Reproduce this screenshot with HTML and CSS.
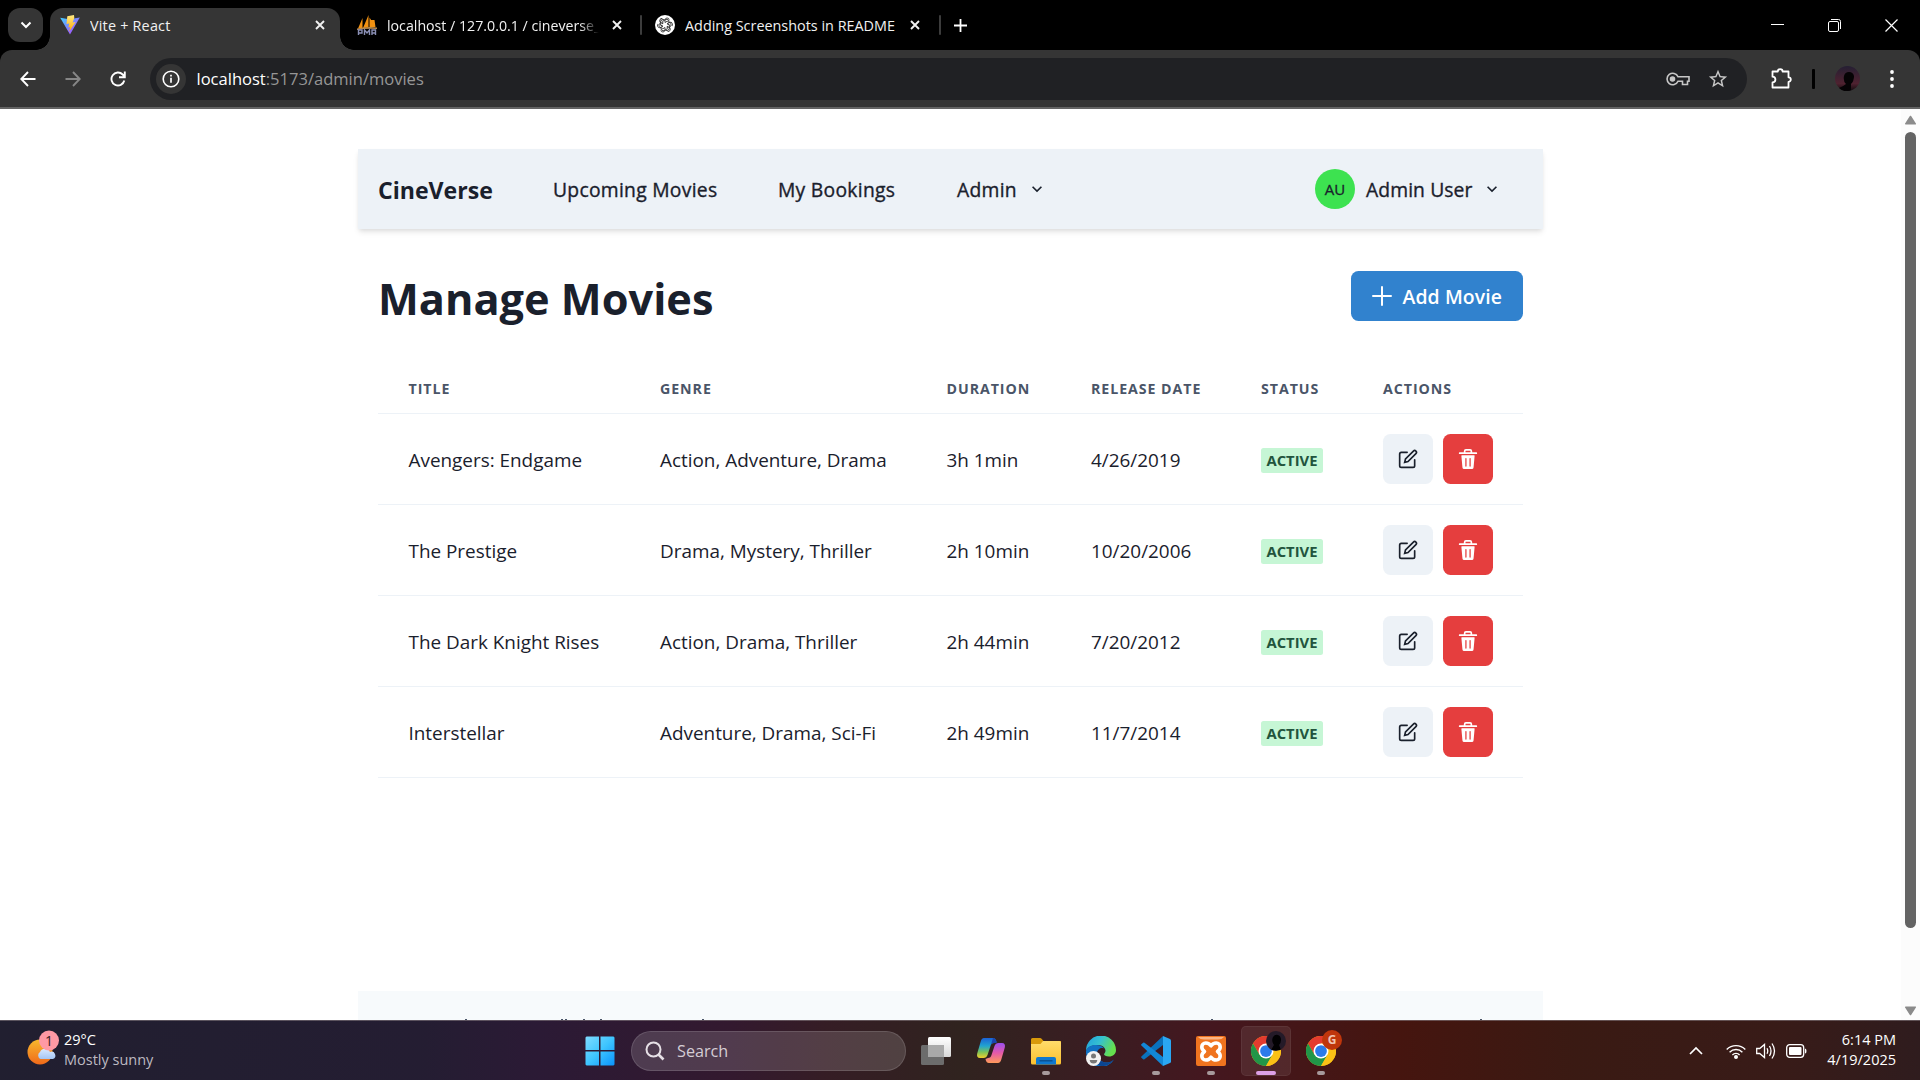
FILE: index.html
```html
<!DOCTYPE html>
<html lang="en">
<head>
<meta charset="utf-8">
<title>Vite + React</title>
<link rel="stylesheet" href="styles.css">
</head>
<body>
<svg class="defs" width="0" height="0" aria-hidden="true">
  <defs>
    <symbol id="chevron" viewBox="0 0 24 24"><path d="M16.59 8.59L12 13.17 7.41 8.59 6 10l6 6 6-6z"/></symbol>
    <symbol id="edit" viewBox="0 0 24 24"><g fill="none" stroke="currentColor" stroke-linecap="round" stroke-width="2"><path d="M11 4H4a2 2 0 0 0-2 2v14a2 2 0 0 0 2 2h14a2 2 0 0 0 2-2v-7"/><path d="M18.5 2.5a2.121 2.121 0 0 1 3 3L12 15l-4 1 1-4 9.5-9.5z"/></g></symbol>
    <symbol id="trash" viewBox="0 0 24 24"><g fill="currentColor"><path d="M19.452 7.5H4.547a.5.5 0 0 0-.5.545l1.287 14.136A2 2 0 0 0 7.326 24h9.347a2 2 0 0 0 1.992-1.819L19.95 8.045a.5.5 0 0 0-.129-.382.5.5 0 0 0-.369-.163zm-9.2 13a.75.75 0 0 1-1.5 0v-9a.75.75 0 0 1 1.5 0zm5 0a.75.75 0 0 1-1.5 0v-9a.75.75 0 0 1 1.5 0zM22 4h-4.75a.25.25 0 0 1-.25-.25V2.5A2.5 2.5 0 0 0 14.5 0h-5A2.5 2.5 0 0 0 7 2.5v1.25a.25.25 0 0 1-.25.25H2a1 1 0 0 0 0 2h20a1 1 0 0 0 0-2zM9 3.75V2.5a.5.5 0 0 1 .5-.5h5a.5.5 0 0 1 .5.5v1.25a.25.25 0 0 1-.25.25h-5.5A.25.25 0 0 1 9 3.75z"/></g></symbol>
    <symbol id="close" viewBox="0 0 10 10"><path d="M1 1l8 8M9 1L1 9" stroke="#f1f1f1" stroke-width="1.9" fill="none"/></symbol>
    <symbol id="chrome" viewBox="0 0 48 48">
      <circle cx="24" cy="24" r="24" fill="#f9bc11"/>
      <path d="M24 24L13.6 30 3.2 12A24 24 0 0 1 44.8 12H24z" fill="#e33b2e"/>
      <path d="M24 24l10.4 6L24 48A24 24 0 0 1 3.2 12L13.6 30z" fill="#219648"/>
      <path d="M44.8 12A24 24 0 0 1 24 48l10.4-18L24 12z" fill="#fbc116"/>
      <circle cx="24" cy="24" r="12" fill="#fff"/><circle cx="24" cy="24" r="9.4" fill="#2b7bea"/>
    </symbol>
    <linearGradient id="vite-a" x1="0" y1="0" x2="1" y2="1"><stop offset="0" stop-color="#41d1ff"/><stop offset="1" stop-color="#bd34fe"/></linearGradient>
    <linearGradient id="vite-b" x1="0" y1="0" x2="0" y2="1"><stop offset="0" stop-color="#ffea83"/><stop offset="1" stop-color="#ffa800"/></linearGradient>
    <linearGradient id="win" x1="0" y1="0" x2="1" y2="1"><stop offset="0" stop-color="#7fdcff"/><stop offset=".5" stop-color="#3ec5ff"/><stop offset="1" stop-color="#0a93fb"/></linearGradient>
    <linearGradient id="sun" x1="0" y1="0" x2="0" y2="1"><stop offset="0" stop-color="#f7b92d"/><stop offset="1" stop-color="#f0691a"/></linearGradient>
    <linearGradient id="cloud" x1="0" y1="0" x2="0" y2="1"><stop offset="0" stop-color="#d9e9ff"/><stop offset="1" stop-color="#a5c5f2"/></linearGradient>
    <linearGradient id="cop-a" x1="0" y1="0" x2="0" y2="1"><stop offset="0" stop-color="#1b62d8"/><stop offset=".4" stop-color="#21a4d0"/><stop offset=".7" stop-color="#7ac25a"/><stop offset="1" stop-color="#f2cf2b"/></linearGradient>
    <linearGradient id="cop-b" x1="0" y1="0" x2="0" y2="1"><stop offset="0" stop-color="#9a4ff0"/><stop offset=".5" stop-color="#e55aa8"/><stop offset="1" stop-color="#ff9a5a"/></linearGradient>
    <linearGradient id="folder" x1="0" y1="0" x2="0" y2="1"><stop offset="0" stop-color="#ffdc6b"/><stop offset="1" stop-color="#fbc02f"/></linearGradient>
    <linearGradient id="edge-a" x1="0" y1="0" x2="1" y2=".4"><stop offset="0" stop-color="#1f9fe0"/><stop offset=".5" stop-color="#35c1d0"/><stop offset="1" stop-color="#66e04e"/></linearGradient>
    <linearGradient id="view" x1="0" y1="0" x2="0" y2="1"><stop offset="0" stop-color="#fff"/><stop offset="1" stop-color="#d8d8d8"/></linearGradient>
  </defs>
</svg>

<div class="screen">
  <header class="tabstrip">
    <button class="tab-search"><svg width="12" height="8" viewBox="0 0 12 8"><path d="M1.500 1.500L6 6l4.500-4.500" fill="none" stroke="#fff" stroke-width="2"/></svg></button>
    <div class="tab tab-active">
      <svg width="20" height="20" viewBox="0 0 20 20"><path d="M.2 2.700l9 1.500 10.600-1.600L10 19.600z" fill="url(#vite-a)"/><path d="M14 0L7.300 1.300 6.500 9l2.700-.4-.8 4 1.800-.5-1.100 4.600L15.600 7l-3 .5L14.300 3z" fill="url(#vite-b)"/></svg>
      <span class="tab-title t-vite">Vite + React</span>
      <svg class="x" width="10" height="10"><use href="#close"/></svg>
    </div>
    <div class="tab tab-db">
      <svg width="20" height="20" viewBox="0 0 20 20"><path d="M5.500 3L1 13.500l4.500-.5zM11.500 0L6 13l5.500-.5zM12.500 2.500V12.500l6-.5zM13 5l5.500 7-1-7z" fill="#f29111"/><path d="M0 13.500q10-2.500 20-1V14q-10-1-20 1z" fill="#b98a4c"/><path d="M1.500 20v-5h3.500v3H2M7.500 20v-5l2.500 3 2.500-3v5M15 20v-5h3.500v5M15 18h3.500" fill="none" stroke="#8a8fb5" stroke-width="1.400"/></svg>
      <span class="tab-title t-db">localhost / 127.0.0.1 / cineverse_</span>
      <svg class="x" width="10" height="10"><use href="#close"/></svg>
    </div>
    <i class="tab-sep"></i>
    <div class="tab tab-gpt">
      <svg width="20" height="20" viewBox="0 0 20 20"><circle cx="10" cy="10" r="10" fill="#fff"/><g fill="none" stroke="#333" stroke-width=".9"><path id="petal" d="M10 7.500l2.200-1.300 2.600 1.500a2.500 2.500 0 0 1 0 4.300M10 7.500V4.500a2.300 2.300 0 0 1 4.300 0"/><use href="#petal" transform="rotate(60 10 10)"/><use href="#petal" transform="rotate(120 10 10)"/><use href="#petal" transform="rotate(180 10 10)"/><use href="#petal" transform="rotate(240 10 10)"/><use href="#petal" transform="rotate(300 10 10)"/></g></svg>
      <span class="tab-title t-gpt">Adding Screenshots in README</span>
      <svg class="x" width="10" height="10"><use href="#close"/></svg>
    </div>
    <i class="tab-sep"></i>
    <svg class="new-tab" width="13" height="13" viewBox="0 0 13 13"><path d="M6.500 0v13M0 6.500h13" stroke="#fff" stroke-width="1.800"/></svg>
    <div class="win-controls">
      <svg width="13" height="13" viewBox="0 0 13 13"><path d="M0 5.500h13" stroke="#fff"/></svg>
      <svg width="13" height="13" viewBox="0 0 13 13" fill="none" stroke="#fff"><rect x=".5" y="2.500" width="10" height="10" rx="1.500"/><path d="M3 .5h7.500a2 2 0 0 1 2 2V10"/></svg>
      <svg width="13" height="13" viewBox="0 0 13 13"><path d="M.5.500l12 12M12.500.500l-12 12" stroke="#fff" stroke-width="1.200"/></svg>
    </div>
  </header>

  <div class="toolbar">
    <div class="nav-icons">
      <svg width="16" height="16" viewBox="0 0 16 16" fill="none" stroke="#fff" stroke-width="1.900"><path d="M15.500 8H1.500M8 1L1.300 8 8 15"/></svg>
      <svg width="16" height="16" viewBox="0 0 16 16" fill="none" stroke="#868686" stroke-width="1.900"><path d="M.5 8h14M8 1l6.700 7L8 15"/></svg>
      <svg width="16" height="16" viewBox="0 0 16 16" fill="none" stroke="#fff" stroke-width="1.900"><path d="M14.300 9.500A6.500 6.500 0 1 1 12.700 3.500L14.500 5.500M14.800.500v5.700H9"/></svg>
    </div>
    <div class="omnibox">
      <span class="site-info"><svg width="18" height="18" viewBox="0 0 18 18"><circle cx="9" cy="9" r="7.800" fill="none" stroke="#fff" stroke-width="1.600"/><path d="M9 7.800v5M9 4.700v1.800" stroke="#fff" stroke-width="1.700"/></svg></span>
      <span class="url"><b>localhost</b>:5173/admin/movies</span>
      <svg class="key" width="24" height="14" viewBox="0 0 24 14" fill="none" stroke="#c7c7c7" stroke-width="1.600"><path d="M12 4.800A5.700 5.700 0 1 0 12 9.200h4.500V12.500h5V9.200H23V4.800z"/><circle cx="6.500" cy="7" r="2" fill="#c7c7c7"/></svg>
      <svg class="star" width="22" height="22" viewBox="0 0 24 24"><path d="M22 9.240l-7.190-.62L12 2 9.190 8.630 2 9.240l5.460 4.730L5.820 21 12 17.270 18.180 21l-1.630-7.030L22 9.240zM12 15.400l-3.760 2.270 1-4.280-3.320-2.880 4.380-.38L12 6.100l1.710 4.040 4.380.38-3.320 2.880 1 4.280L12 15.400z" fill="#c7c7c7"/></svg>
    </div>
    <svg class="ext" width="21" height="21" viewBox="0 0 21 21"><path d="M1.500 3.500h5.300a2.400 2.400 0 0 1 4.800 0H17.500V9.300a2.300 2.300 0 0 1 0 4.600V19.500h-16V14.500a2.900 2.900 0 0 0 0-5.800z" fill="none" stroke="#fff" stroke-width="1.800" stroke-linejoin="round"/></svg>
    <i class="bar-sep"></i>
    <svg class="me" width="25" height="25" viewBox="0 0 25 25"><defs><linearGradient id="dusk" x1="0" y1="0" x2="0" y2="1"><stop offset="0" stop-color="#251f33"/><stop offset=".7" stop-color="#4f2230"/><stop offset="1" stop-color="#100a0d"/></linearGradient></defs><circle cx="12.500" cy="12.500" r="12.500" fill="url(#dusk)"/><path d="M4 22q5-2 7-4-3-3-2-8 1-4 5-4t5 4q0 5-3 8v6q-7 3-12-2z" fill="#050305"/></svg>
    <svg class="dots" width="4" height="18" viewBox="0 0 4 18" fill="#fff"><circle cx="2" cy="2" r="1.900"/><circle cx="2" cy="9" r="1.900"/><circle cx="2" cy="16" r="1.900"/></svg>
  </div>

  <div class="viewport">
    <div class="page">
      <nav class="navbar">
        <span class="brand">CineVerse</span>
        <span class="link l-up">Upcoming Movies</span>
        <span class="link l-book">My Bookings</span>
        <span class="link l-admin">Admin</span>
        <svg class="chev" width="20" height="20"><use href="#chevron"/></svg>
        <span class="avatar">AU</span>
        <span class="link l-user">Admin User</span>
        <svg class="chev chev-user" width="20" height="20"><use href="#chevron"/></svg>
      </nav>
      <main class="content">
        <div class="heading">
          <h1>Manage Movies</h1>
          <button class="add"><svg width="20" height="20" viewBox="0 0 20 20"><path d="M10 1v18M1 10h18" stroke="#fff" stroke-width="2" stroke-linecap="round"/></svg><span class="add-t">Add Movie</span></button>
        </div>
        <div class="table">
          <div class="row head"><span>Title</span><span>Genre</span><span>Duration</span><span>Release Date</span><span>Status</span><span>Actions</span></div>
          <div class="row"><span class="cell">Avengers: Endgame</span><span class="cell">Action, Adventure, Drama</span><span class="cell">3h 1min</span><span class="cell">4/26/2019</span><span><em class="badge">Active</em></span><span class="actions"><button class="btn edit"><svg width="20" height="20"><use href="#edit"/></svg></button><button class="btn del"><svg width="20" height="20"><use href="#trash"/></svg></button></span></div>
          <div class="row"><span class="cell">The Prestige</span><span class="cell">Drama, Mystery, Thriller</span><span class="cell">2h 10min</span><span class="cell">10/20/2006</span><span><em class="badge">Active</em></span><span class="actions"><button class="btn edit"><svg width="20" height="20"><use href="#edit"/></svg></button><button class="btn del"><svg width="20" height="20"><use href="#trash"/></svg></button></span></div>
          <div class="row"><span class="cell">The Dark Knight Rises</span><span class="cell">Action, Drama, Thriller</span><span class="cell">2h 44min</span><span class="cell">7/20/2012</span><span><em class="badge">Active</em></span><span class="actions"><button class="btn edit"><svg width="20" height="20"><use href="#edit"/></svg></button><button class="btn del"><svg width="20" height="20"><use href="#trash"/></svg></button></span></div>
          <div class="row"><span class="cell">Interstellar</span><span class="cell">Adventure, Drama, Sci-Fi</span><span class="cell">2h 49min</span><span class="cell">11/7/2014</span><span><em class="badge">Active</em></span><span class="actions"><button class="btn edit"><svg width="20" height="20"><use href="#edit"/></svg></button><button class="btn del"><svg width="20" height="20"><use href="#trash"/></svg></button></span></div>
        </div>
      </main>
      <footer class="footer"><svg width="1185" height="1" viewBox="0 0 1185 1" fill="#4a5568"><path d="M107 0h2v1h-2zM203 0h2v1h-2zM207 0h2v1h-2zM225 0h2v1h-2zM242 0h2v1h-2zM344 0h2v1h-2zM853 0h2v1h-2zM1122 0h2v1h-2z"/></svg></footer>
    </div>
    <div class="scrollbar">
      <svg width="13" height="10" viewBox="0 0 13 10"><path d="M6.500 1.500l4.800 7.300H1.700z" fill="#8b8b8b" stroke="#8b8b8b" stroke-width="1.500" stroke-linejoin="round"/></svg>
      <i class="thumb"></i>
      <svg class="down" width="13" height="10" viewBox="0 0 13 10"><path d="M6.500 8.500l4.800-7.300H1.700z" fill="#8b8b8b" stroke="#8b8b8b" stroke-width="1.500" stroke-linejoin="round"/></svg>
    </div>
  </div>

  <footer class="taskbar">
    <div class="weather">
      <svg width="34" height="38" viewBox="0 0 34 38"><circle cx="14" cy="22" r="12.500" fill="url(#sun)"/><path d="M14.500 29a4 4 0 0 1-.5-7 5.500 5.500 0 0 1 10 0 3.500 3.500 0 0 1 3 7z" fill="url(#cloud)"/><circle cx="23" cy="10.500" r="10" fill="#ff99a4"/><text x="23" y="15.500" text-anchor="middle" class="count">1</text></svg>
      <div class="weather-text"><span class="w-temp">29°C</span><span class="w-desc">Mostly sunny</span></div>
    </div>
    <div class="apps">
      <svg class="start" width="30" height="30" viewBox="0 0 30 30"><path d="M1.500.500H14V14H.500V1.500zM15.500.500H28.500L29.500 1.500V14h-14zM.500 15.500H14v14H1.500l-1-1zM15.500 15.500h14v13l-1 1h-13z" fill="url(#win)"/></svg>
      <div class="search"><svg width="20" height="20" viewBox="0 0 20 20" fill="none" stroke="#e6e0e6" stroke-width="2"><circle cx="8.500" cy="8.500" r="7"/><path d="M13.500 13.500l5 5" stroke-width="2.600"/></svg><span class="s-text">Search</span></div>
      <div class="app"><svg width="30" height="30" viewBox="0 0 30 30"><rect x="0" y="9" width="23" height="20" rx="1.500" fill="#6c6c6c"/><rect x="7" y="1" width="23" height="20" rx="1.500" fill="url(#view)"/><path d="M7 9h16v12H7z" fill="#a9a9a9"/></svg></div>
      <div class="app"><svg width="30" height="30" viewBox="0 0 30 30"><path d="M8 2h9c2 0 3 1.500 3.500 4L18 7c-2 0-3 1-3.500 3l-3 9c-.7 2-2 3-4 3H4c-2.500 0-3.500-2-2.800-4.500l3.500-12C5.300 3.300 6.300 2 8 2z" fill="url(#cop-a)"/><path d="M22 27h-9c-2 0-3-1.500-3.500-4l2.500-1c2 0 3-1 3.500-3l3-9c.7-2 2-3 4-3H26c2.500 0 3.500 2 2.800 4.500l-3.500 12C24.700 25.700 23.700 27 22 27z" fill="url(#cop-b)"/><path d="M17 2c2 0 3 1.500 3.800 5h-3c-2 0-2.800 1-3.300 3z" fill="#1a45ad"/></svg></div>
      <div class="app run"><svg width="30" height="30" viewBox="0 0 30 30"><path d="M0 3.500Q0 2 1.500 2H9q1 0 1.800 1L12.500 5H30v8H0z" fill="#d99a0b"/><path d="M0 8h9.500l2.500-3h16.500Q30 5 30 6.500V27q0 1.500-1.500 1.500h-27Q0 28.500 0 27z" fill="url(#folder)"/><path d="M5 28.500V23q0-2 2-2h16q2 0 2 2v5.500z" fill="#0f78cf"/><path d="M8.500 24.800h13" stroke="#0a4d8c" stroke-width="1.300"/></svg></div>
      <div class="app"><svg width="30" height="30" viewBox="0 0 30 30"><path d="M0 15a15 15 0 0 1 30-1c0 4-3 6.500-7 6.500-3 0-5-1-5-2.200 0-.8 1.500-1.300 1.500-3.500 0-3-3-5.800-7.500-5.800C6 9 1.500 11 0 15z" fill="url(#edge-a)"/><path d="M0 15c1-4 5.500-6.200 10-6 4 0 7 1.500 8 3.500-4-1.500-7 1.500-7 5.500 0 6 6 9 11 8.500 3-.3 5-2 6-3A15 15 0 0 1 0 15z" fill="#1172c4"/><path d="M11 18c0 6 6 9 11 8.500 3-.3 5-2 6-3-4 6-11 8-16 5.500-4-3-4-8-1-11z" fill="#0c4591"/><circle cx="7.500" cy="22.500" r="7.500" fill="#f2f2f2"/><circle cx="7.500" cy="20" r="2.500" fill="#777"/><path d="M3.700 24h7.600q-.3 3.600-3.800 3.600T3.700 24z" fill="#777"/></svg></div>
      <div class="app run"><svg width="30" height="30" viewBox="0 0 30 30"><path d="M22 0v9L3.500 23.300q-.7.500-1.400 0L.4 21.700q-.7-.7 0-1.300z" fill="#0a72bd"/><path d="M22 30v-9L3.500 6.700q-.7-.5-1.400 0L.4 8.300q-.7.700 0 1.300z" fill="#1287d6"/><path d="M22 0l7 3q1 .5 1 1.500v21q0 1-1 1.500l-7 3z" fill="#2aa7f3"/></svg></div>
      <div class="app run"><svg width="30" height="30" viewBox="0 0 30 30"><rect width="30" height="30" rx="2" fill="#f0741f"/><path d="M2 1h26q-2 2.500-6 2.500H8Q4 3.500 2 1z" fill="#fbb585"/><path d="M15 9.800C13.500 7.500 11.500 7 9.800 7 7.300 7 5.800 8.700 5.800 11c0 2 1 3.300 2.700 4.500-1.700 1.200-2.700 2.500-2.700 4.500 0 2.300 1.500 4 4 4 1.700 0 3.700-.5 5.200-2.800 1.500 2.300 3.500 2.800 5.200 2.800 2.500 0 4-1.700 4-4 0-2-1-3.300-2.700-4.500 1.700-1.200 2.700-2.500 2.700-4.500 0-2.300-1.500-4-4-4-1.700 0-3.700.5-5.200 2.800z" fill="none" stroke="#fff" stroke-width="3.600" stroke-linejoin="round"/></svg></div>
      <div class="app run active"><svg width="30" height="30"><use href="#chrome"/></svg><span class="badge-dot dark"><svg width="20" height="20" viewBox="0 0 20 20"><path d="M5 19l3-5q-3-4-1-8 2-3 5-2 3 1 3 5 0 3-2 5l2 5z" fill="#020102"/></svg></span></div>
      <div class="app run"><svg width="30" height="30"><use href="#chrome"/></svg><span class="badge-dot red">G</span></div>
    </div>
    <div class="tray">
      <svg class="t-chev" width="14" height="9" viewBox="0 0 14 9"><path d="M1 8l6-6 6 6" fill="none" stroke="#fff" stroke-width="1.700"/></svg>
      <svg class="t-wifi" width="20" height="16" viewBox="0 0 20 16" fill="none" stroke="#fff" stroke-width="1.400"><path d="M.7 6.500a13 13 0 0 1 18.600 0M3.600 9.200a9 9 0 0 1 12.800 0M6.400 11.900a5 5 0 0 1 7.200 0"/><circle cx="10" cy="14" r="1.300" fill="#fff"/></svg>
      <svg class="t-vol" width="20" height="18" viewBox="0 0 20 18" fill="none" stroke="#fff" stroke-width="1.300"><path d="M.7 6.500h3L8.500 2.500v13l-4.800-4h-3zM11 6.300q1.500 2.700 0 5.400M13.500 4q3 5 0 10M16 1.500q5 7.500 0 15"/></svg>
      <svg class="t-bat" width="21" height="14" viewBox="0 0 21 14"><rect x=".7" y=".7" width="17" height="12.600" rx="3" fill="none" stroke="#fff" stroke-width="1.300"/><rect x="3" y="3" width="12.500" height="8" rx="1" fill="#fff"/><path d="M19 4.500q1.500 0 1.500 2.500T19 9.500z" fill="#fff"/></svg>
      <div class="clock"><span>6:14 PM</span><span>4/19/2025</span></div>
    </div>
  </footer>
</div>
</body>
</html>
```
FILE: styles.css
```css
* { box-sizing: border-box; }
body { margin: 0; font-family: "Open Sans", "Noto Sans", sans-serif; color: #1a202c; background: #fff; }
button { border: 0; padding: 0; font: inherit; }
svg { display: block; flex: none; }
.defs { position: absolute; }
.screen { width: 1920px; height: 1080px; display: flex; flex-direction: column; overflow: hidden; background: #000; }

.tabstrip { height: 50px; flex: none; background: #000; display: flex; align-items: center; padding-left: 8px; color: #f1f1f1; }
.tab-search { width: 35px; height: 34px; border-radius: 12px; background: #353535; display: grid; place-items: center; margin-right: 7px; }
.tab { display: flex; align-items: center; height: 42px; align-self: flex-end; padding-bottom: 8px; font-size: 14.400px; white-space: nowrap; }
.tab-title { margin-left: 10px; overflow: hidden; line-height: 24px; padding-top: 1px; }
.t-vite { letter-spacing: .2px; }
.tab .x { margin-left: auto; }
.tab-active { width: 290px; padding: 0 15px 8px 10px; background: #353535; border-radius: 13px 13px 0 0; position: relative; }
.tab-active::before, .tab-active::after { content: ""; position: absolute; bottom: 0; width: 14px; height: 14px; }
.tab-active::before { left: -14px; background: radial-gradient(circle at 0 0, transparent 13.500px, #353535 14px); }
.tab-active::after { right: -14px; background: radial-gradient(circle at 100% 0, transparent 13.500px, #353535 14px); }
.tab-db { width: 282px; padding: 0 0 8px 17px; margin-right: 18px; }
.t-db { width: 214px; font-size: 14.200px; -webkit-mask-image: linear-gradient(90deg, #000 90%, transparent 99%); mask-image: linear-gradient(90deg, #000 90%, transparent 99%); }
.tab-gpt { width: 280px; padding: 0 2px 8px 13px; margin-right: 17px; }
.tab-sep { width: 2px; height: 20px; background: #3c3c3c; border-radius: 1px; }
.new-tab { margin-left: 13px; }
.win-controls { margin-left: auto; display: flex; gap: 44px; padding-right: 22px; }

.toolbar { height: 59px; flex: none; background: #353535; border-bottom: 2px solid #646464; border-radius: 12px 12px 0 0; display: flex; align-items: center; padding-left: 19.500px; }
.nav-icons { display: flex; gap: 29px; width: 130.500px; }
.omnibox { width: 1597px; height: 42px; border-radius: 21px; background: #202124; display: flex; align-items: center; padding: 0 18px 0 6px; }
.site-info { width: 30px; height: 30px; border-radius: 50%; background: #353535; display: grid; place-items: center; }
.url { font-size: 16.550px; color: #969696; margin-left: 10.500px; }
.url b { color: #fff; font-weight: 400; }
.key { margin-left: auto; }
.star { margin-left: 17px; }
.ext { margin-left: 24px; }
.bar-sep { width: 3px; height: 20px; background: #000; margin-left: 20px; border-radius: 1px; }
.me { margin-left: 20px; }
.dots { margin-left: 30px; }

.viewport { flex: 1; display: flex; justify-content: space-between; min-height: 0; background: #fff; }
.page { width: 1185px; margin-left: 358px; display: flex; flex-direction: column; padding-top: 40px; }
.navbar { height: 80px; flex: none; background: #edf2f7; display: flex; align-items: center; padding-left: 20px; box-shadow: 0 4px 6px -1px rgba(0,0,0,.1), 0 2px 4px -1px rgba(0,0,0,.06); white-space: nowrap; }
.brand { font-size: 23.100px; font-weight: 700; width: 175px; padding-top: 1px; }
.link { font-size: 19.300px; font-weight: 500; letter-spacing: .28px; -webkit-text-stroke: .35px #1a202c; padding-top: 1px; }
.l-up { width: 225px; }
.l-book { width: 179px; }
.l-admin { width: 70px; }
.chev { fill: #1a202c; }
.avatar { width: 40px; height: 40px; border-radius: 50%; background: #3de250; display: grid; place-items: center; font-size: 15px; font-weight: 500; -webkit-text-stroke: .3px #1a202c; margin-left: auto; }
.l-user { margin-left: 11px; width: 116px; letter-spacing: .1px; }
.chev-user { margin-right: 41px; }
.content { padding: 42px 20px 0; flex: none; }
.heading { display: flex; justify-content: space-between; height: 50px; }
h1 { margin: 0; font-size: 43.300px; line-height: 55px; font-weight: 700; }
.add { width: 172px; height: 50px; border-radius: 7.500px; background: #3182ce; color: #fff; font-size: 19.400px; font-weight: 600; display: flex; align-items: center; padding-left: 21px; gap: 10.500px; white-space: nowrap; letter-spacing: .1px; }
.table { margin-top: 42px; }
.row { display: grid; grid-template-columns: 251.500px 286.500px 144.500px 170px 122px 1fr; align-items: center; height: 91px; padding-left: 30.500px; border-bottom: 1px solid #edf2f7; font-size: 18.900px; white-space: nowrap; }
.cell { padding-top: 2px; }
.row.head { height: 51px; font-size: 14.200px; font-weight: 700; color: #4a5568; text-transform: uppercase; letter-spacing: .95px; }
.badge { font-style: normal; display: block; width: 62px; height: 25px; margin-top: 2px; line-height: 25px; border-radius: 2.500px; background: #c6f6d5; color: #22543d; font-size: 14.800px; font-weight: 700; text-transform: uppercase; text-align: center; }
.actions { display: flex; gap: 10px; }
.btn { width: 50px; height: 50px; border-radius: 7.500px; display: grid; place-items: center; }
.edit { background: #edf2f7; color: #1a202c; }
.del { background: #e53e3e; color: #fff; }
.footer { margin-top: auto; height: 29px; flex: none; background: #f7fafc; display: flex; align-items: flex-end; }
.scrollbar { width: 19px; background: #fcfcfc; display: flex; flex-direction: column; align-items: center; padding: 6px 0 4px; }
.thumb { width: 11px; height: 796px; background: #636363; border-radius: 6px; margin-top: 7px; }
.down { margin-top: auto; }

.taskbar { height: 60px; flex: none; display: flex; align-items: center; color: #fff; border-top: 1px solid rgba(130,120,125,.6); background: linear-gradient(90deg, #211f30 0, #241d32 22%, #2b1a35 28%, #33192f 38%, #351d25 43%, #30231f 50%, #3a1d22 57%, #44171f 63%, #45150f 73%, #3a1a13 82%, #381b18 93%, #2f1c1e 100%); }
.weather { display: flex; align-items: center; gap: 4px; padding: 0 0 4px 26px; width: 584.500px; font-size: 14.500px; }
.weather-text, .clock { display: flex; flex-direction: column; line-height: 20px; }
.weather-text { padding-top: 2px; }
.w-desc { color: #bdb9c1; }
.count { font-size: 14px; fill: #3a1d22; }
.apps { display: flex; align-items: center; }
.search { width: 275px; height: 40px; border-radius: 20px; margin-left: 16.500px; margin-right: 5px; background: rgba(255,255,255,.15); border: 1px solid rgba(255,255,255,.13); display: flex; align-items: center; padding-left: 13px; gap: 12px; font-size: 16.200px; color: #d5cdd5; }
.app { width: 50px; height: 50px; margin-right: 5px; display: grid; place-items: center; position: relative; border-radius: 5px; }
.run::after { content: ""; position: absolute; bottom: 1px; left: 21px; width: 8px; height: 4px; border-radius: 2px; background: #a79a9c; }
.active { background: rgba(255,255,255,.08); border: 1px solid rgba(255,255,255,.06); }
.active::after { left: 14px; bottom: 0; width: 20px; background: #dda0e6; }
.badge-dot { position: absolute; right: 4px; top: 4px; width: 20px; height: 20px; border-radius: 50%; font-size: 12px; line-height: 20px; text-align: center; font-weight: 700; overflow: hidden; }
.dark { background: #241a28; }
.red { background: #bf360c; color: #f0c4b4; }
.tray { margin-left: auto; display: flex; align-items: center; padding-right: 24px; }
.t-wifi { margin-left: 23px; }
.t-vol { margin-left: 10px; }
.t-bat { margin-left: 10px; }
.clock { width: 89px; font-size: 14.500px; text-align: right; padding-bottom: 2px; }
```
